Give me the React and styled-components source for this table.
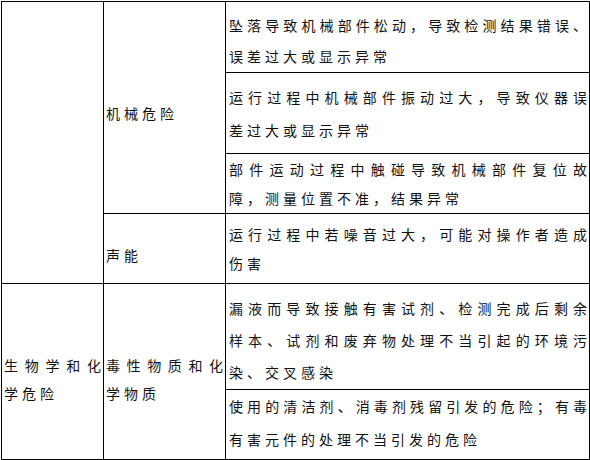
import React from "react";
import styled, { createGlobalStyle } from "styled-components";

const Global = createGlobalStyle`
  html, body { margin: 0; padding: 0; background: #fff; }
  body { font-family: "Noto Sans CJK SC", "Noto Sans", sans-serif; color: #111; }
`;

const Page = styled.div`
  padding: 1px 0 0 1px;
  width: 590px;
  height: 460px;
  box-sizing: border-box;
  overflow: hidden;
`;

const Table = styled.table`
  border-collapse: collapse;
  table-layout: fixed;
  width: 588px;
`;

const Row = styled.tr`
  height: ${(p) => p.$h}px;
`;

const Cell = styled.td`
  border: 1px solid #000;
  vertical-align: top;
  padding: ${(p) => p.$pt}px ${(p) => p.$pr ?? 2}px 0 ${(p) => p.$pl ?? 2}px;
  font-size: 14px;
  line-height: ${(p) => p.$lh ?? 32}px;
  box-sizing: border-box;
`;

const Line = styled.div`
  white-space: ${(p) => (p.$full ? "normal" : "nowrap")};
  letter-spacing: ${(p) => (p.$full ? 0 : 4)}px;
  text-align: ${(p) => (p.$full ? "justify" : "left")};
  text-align-last: ${(p) => (p.$full ? "justify" : "left")};
`;

const Lines = ({ lines }) =>
  lines.map((l, i) => (
    <Line key={i} $full={i < lines.length - 1}>
      {l}
    </Line>
  ));

const Desc = ({ pt, lh, lines }) => (
  <Cell $pt={pt} $lh={lh} $pl={3} $pr={2}>
    <Lines lines={lines} />
  </Cell>
);

export default function App() {
  return (
    <>
      <Global />
      <Page>
        <Table>
          <colgroup>
            <col style={{ width: 102 }} />
            <col style={{ width: 122 }} />
            <col style={{ width: 364 }} />
          </colgroup>
          <tbody>
            <Row $h={70}>
              <Cell rowSpan={4} $pt={0} />
              <Cell rowSpan={3} $pt={95}>
                <Lines lines={["机械危险"]} />
              </Cell>
              <Desc
                pt={8}
                lh={31}
                lines={["坠落导致机械部件松动，导致检测结果错误、", "误差过大或显示异常"]}
              />
            </Row>
            <Row $h={81}>
              <Desc
                pt={8}
                lh={33}
                lines={["运行过程中机械部件振动过大，导致仪器误", "差过大或显示异常"]}
              />
            </Row>
            <Row $h={60}>
              <Desc
                pt={1}
                lh={29}
                lines={["部件运动过程中触碰导致机械部件复位故", "障，测量位置不准，结果异常"]}
              />
            </Row>
            <Row $h={70}>
              <Cell $pt={25}>
                <Lines lines={["声能"]} />
              </Cell>
              <Desc
                pt={6}
                lh={29}
                lines={["运行过程中若噪音过大，可能对操作者造成", "伤害"]}
              />
            </Row>
            <Row $h={106}>
              <Cell rowSpan={2} $pt={67} $lh={28}>
                <Lines lines={["生物学和化", "学危险"]} />
              </Cell>
              <Cell rowSpan={2} $pt={67} $lh={28}>
                <Lines lines={["毒性物质和化", "学物质"]} />
              </Cell>
              <Desc
                pt={8}
                lh={32}
                lines={[
                  "漏液而导致接触有害试剂、检测完成后剩余",
                  "样本、试剂和废弃物处理不当引起的环境污",
                  "染、交叉感染",
                ]}
              />
            </Row>
            <Row $h={70}>
              <Desc
                pt={0}
                lh={33}
                lines={["使用的清洁剂、消毒剂残留引发的危险；有毒", "有害元件的处理不当引发的危险"]}
              />
            </Row>
          </tbody>
        </Table>
      </Page>
    </>
  );
}
